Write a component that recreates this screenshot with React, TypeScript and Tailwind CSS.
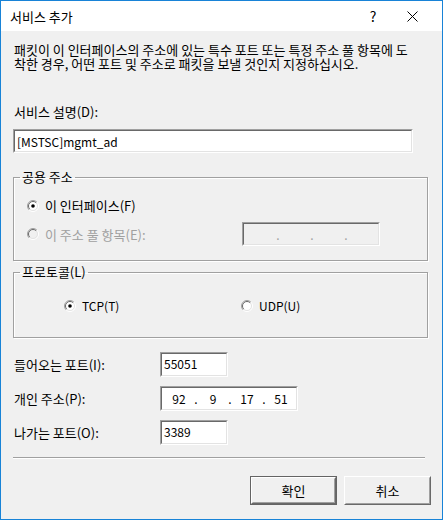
import React from "react"

const font = "font-['Noto_Sans_CJK_KR','Noto_Sans',sans-serif]"

function Radio({ checked, disabled }: { checked?: boolean; disabled?: boolean }) {
  return (
    <svg width="12" height="12" viewBox="0 0 12 12" className="shrink-0">
      <circle cx="6" cy="6" r="5" fill={disabled ? "#f0f0f0" : "#ffffff"} />
      <path d="M2.1 9.9 A5.5 5.5 0 0 1 9.9 2.1" fill="none" stroke="#a0a0a0" strokeWidth="1" />
      <path d="M9.9 2.1 A5.5 5.5 0 0 1 2.1 9.9" fill="none" stroke="#ffffff" strokeWidth="1" />
      <path d="M2.8 9.2 A4.5 4.5 0 0 1 9.2 2.8" fill="none" stroke="#696969" strokeWidth="1" />
      <path d="M9.2 2.8 A4.5 4.5 0 0 1 2.8 9.2" fill="none" stroke="#e3e3e3" strokeWidth="1" />
      {checked && <circle cx="6" cy="6" r="1.8" fill="#000000" />}
    </svg>
  )
}

// sunken 3d edit box
function Edit({ className, children, disabled }: { className?: string; children?: React.ReactNode; disabled?: boolean }) {
  return (
    <div className={`border border-t-[#a0a0a0] border-l-[#a0a0a0] border-b-white border-r-white ${className ?? ""}`}>
      <div
        className={`h-full border border-t-[#696969] border-l-[#696969] border-b-[#e3e3e3] border-r-[#e3e3e3] text-[12px] ${
          disabled ? "bg-[#f0f0f0]" : "bg-white"
        }`}
      >
        {children}
      </div>
    </div>
  )
}

function IpFields({ parts, disabled }: { parts: string[]; disabled?: boolean }) {
  const color = disabled ? "text-[#a0a0a0]" : "text-black"
  return (
    <div className={`flex h-full items-center pl-[6px] ${color}`}>
      {parts.map((p, i) => (
        <React.Fragment key={i}>
          <span className="w-[22px] text-center">{p}</span>
          {i < 3 && <span className="w-[12px] text-center">.</span>}
        </React.Fragment>
      ))}
    </div>
  )
}

function Button({ label, primary }: { label: string; primary?: boolean }) {
  return (
    <div className={`h-[29px] w-[87px] ${primary ? "border border-[#646464]" : ""}`}>
      <div className="h-full border border-t-white border-l-white border-b-[#696969] border-r-[#696969]">
        <div className="flex h-full items-center justify-center border border-t-[#f0f0f0] border-l-[#f0f0f0] border-b-[#a0a0a0] border-r-[#a0a0a0] bg-[#f0f0f0]">
          {label}
        </div>
      </div>
    </div>
  )
}

export default function App() {
  return (
    <div className={`h-[520px] w-[443px] border border-[#1883d7] bg-[#f0f0f0] text-[13px] leading-[15px] text-black ${font}`}>
      {/* TITLE BAR */}
      <div className="flex h-[30px] items-center bg-white">
        <span className="pl-[9px]">서비스 추가</span>
        <span className="ml-auto w-[20px] text-center text-[14px]">?</span>
        <div className="flex w-[59px] justify-center">
          <svg width="11" height="11" viewBox="0 0 11 11">
            <path d="M0.5 0.5 L10.5 10.5 M10.5 0.5 L0.5 10.5" stroke="#000" strokeWidth="1" />
          </svg>
        </div>
      </div>

      <div className="pl-[12px]">
        <p className="mt-[12px] whitespace-nowrap pl-[1px] leading-[14px]">
          패킷이 이 인터페이스의 주소에 있는 특수 포트 또는 특정 주소 풀 항목에 도
          <br />
          착한 경우, 어떤 포트 및 주소로 패킷을 보낼 것인지 지정하십시오.
        </p>

        <div className="mt-[33px] pl-[1px]">서비스 설명(D):</div>
        <Edit className="mt-[10px] h-[24px] w-[400px]">
          <div className="flex h-full items-center pl-[2px]">[MSTSC]mgmt_ad</div>
        </Edit>

        {/* PUBLIC ADDRESS */}
        <fieldset className="mt-[17px] w-[415px] border border-[#a0a0a0] shadow-[1px_1px_0_#ffffff,inset_1px_1px_0_#ffffff]">
          <legend className="ml-[6px] px-[2px] leading-[14px]">공용 주소</legend>
          <div className="pb-[14px] pl-[13px]">
            <div className="mt-[14px] flex items-center gap-[6px]">
              <Radio checked />
              <span>이 인터페이스(F)</span>
            </div>
            <div className="mt-[9px] flex items-center">
              <div className="flex w-[215px] items-center gap-[6px] text-[#a0a0a0]">
                <Radio disabled />
                <span>이 주소 풀 항목(E):</span>
              </div>
              <Edit className="h-[24px] w-[138px]" disabled>
                <IpFields parts={["", "", "", ""]} disabled />
              </Edit>
            </div>
          </div>
        </fieldset>

        {/* PROTOCOL */}
        <fieldset className="mt-[4px] w-[415px] border border-[#a0a0a0] shadow-[1px_1px_0_#ffffff,inset_1px_1px_0_#ffffff]">
          <legend className="ml-[6px] px-[2px] leading-[14px]">프로토콜(L)</legend>
          <div className="mt-[19px] flex items-center pb-[24px] pl-[50px] text-[12px]">
            <div className="flex w-[177px] items-center gap-[6px]">
              <Radio checked />
              <span>TCP(T)</span>
            </div>
            <div className="flex items-center gap-[6px]">
              <Radio />
              <span>UDP(U)</span>
            </div>
          </div>
        </fieldset>

        {/* PORTS */}
        <div className="mt-[14px] flex flex-col gap-[9px]">
          <div className="flex items-center">
            <span className="w-[147px] pl-[1px]">들어오는 포트(I):</span>
            <Edit className="h-[25px] w-[68px]">
              <div className="pl-[2px] pt-[2px]">55051</div>
            </Edit>
          </div>
          <div className="flex items-center">
            <span className="w-[147px] pl-[1px]">개인 주소(P):</span>
            <Edit className="h-[25px] w-[138px]">
              <IpFields parts={["92", "9", "17", "51"]} />
            </Edit>
          </div>
          <div className="flex items-center">
            <span className="w-[147px] pl-[1px]">나가는 포트(O):</span>
            <Edit className="h-[25px] w-[68px]">
              <div className="pl-[2px] pt-[2px]">3389</div>
            </Edit>
          </div>
        </div>

        <div className="mt-[12px] w-[412px] border-t border-b border-t-[#a0a0a0] border-b-white" />

        <div className="mt-[17px] flex w-[418px] justify-end gap-[7px]">
          <Button label="확인" primary />
          <Button label="취소" />
        </div>
      </div>
    </div>
  )
}
